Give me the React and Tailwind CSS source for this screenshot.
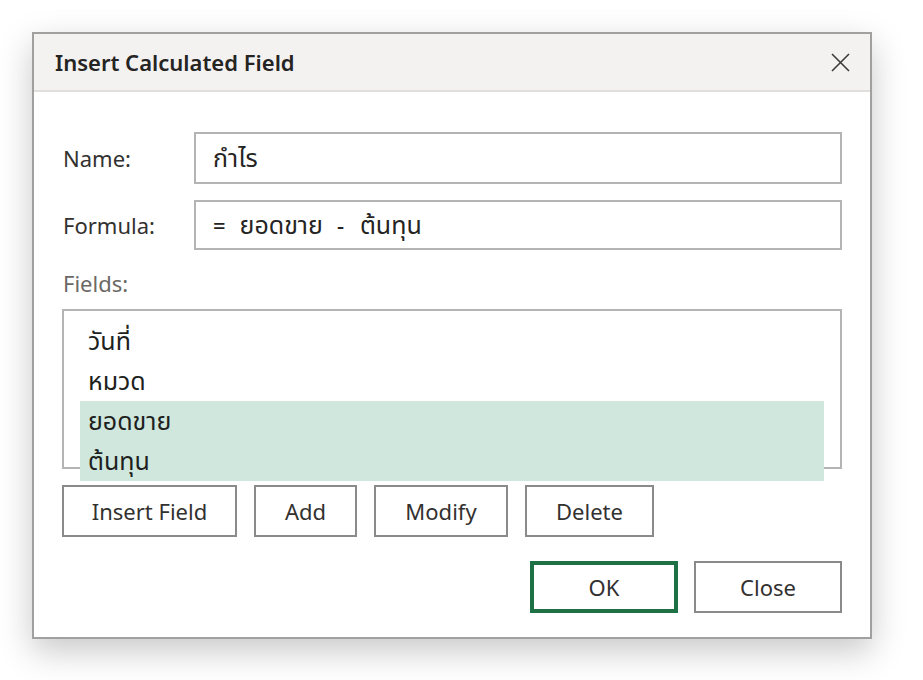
export default function App() {
  const fields = [
    { name: "วันที่", selected: false },
    { name: "หมวด", selected: false },
    { name: "ยอดขาย", selected: true },
    { name: "ต้นทุน", selected: true },
  ];

  const btn =
    "flex h-[52px] items-center justify-center border-2 border-[#8a8a8a] bg-white text-[22px] text-[#323130]";

  return (
    <div className="min-h-[680px] bg-white pl-[32px] pt-[32px] font-['Noto_Sans','Noto_Sans_Thai','DejaVu_Sans',sans-serif]">
      <div className="flex h-[607px] w-[840px] flex-col border-2 border-[#a0a0a0] bg-white shadow-[0_12px_32px_rgba(0,0,0,0.22)]">
        {/* title bar */}
        <div className="flex h-[58px] shrink-0 items-center justify-between border-b-2 border-[#e1dfdd] bg-[#f3f2f1] pl-[21px] pr-[20px]">
          <span className="text-[22px] font-semibold text-[#252423]">Insert Calculated Field</span>
          <svg width="19" height="19" viewBox="0 0 19 19" className="text-[#3b3a39]">
            <path d="M1 1 L18 18 M18 1 L1 18" stroke="currentColor" strokeWidth="1.6" fill="none" />
          </svg>
        </div>

        <div className="flex flex-col px-[28px] pt-[40px] text-[#323130]">
          <div className="flex items-center">
            <label className="w-[132px] pl-[1px] text-[22px]">Name:</label>
            <div className="flex h-[52px] flex-1 items-center border-2 border-[#b4b4b4] px-[17px] text-[25px] text-[#252423]">
              กำไร
            </div>
          </div>
          <div className="mt-[16px] flex items-center">
            <label className="w-[132px] pl-[1px] text-[22px]">Formula:</label>
            <div className="flex h-[50px] flex-1 items-center border-2 border-[#b4b4b4] px-[17px] text-[22px] text-[#252423]">
              <span className="font-medium">=</span>
              <span className="ml-[14px] text-[25px]">ยอดขาย</span>
              <span className="ml-[14px] font-medium">-</span>
              <span className="ml-[16px] text-[25px]">ต้นทุน</span>
            </div>
          </div>

          <div className="mt-[17px] pl-[1px] text-[22px] text-[#6b6966]">Fields:</div>

          <div className="mt-[9px] h-[160px] border-2 border-[#b4b4b4] px-[16px] pt-[10px]">
            {fields.map((f) => (
              <div
                key={f.name}
                className={
                  "flex h-[40px] items-center pl-[8px] text-[25px] text-[#201f1e] " +
                  (f.selected ? "bg-[#cfe7dc]" : "")
                }
              >
                {f.name}
              </div>
            ))}
          </div>

          <div className="mt-[16px] flex gap-[17px]">
            <button className={btn + " w-[175px]"}>Insert Field</button>
            <button className={btn + " w-[103px]"}>Add</button>
            <button className={btn + " w-[134px]"}>Modify</button>
            <button className={btn + " w-[129px]"}>Delete</button>
          </div>

          <div className="mt-[24px] flex justify-end gap-[16px]">
            <button className="flex h-[52px] w-[148px] items-center justify-center border-4 border-[#1e7145] bg-white text-[22px] text-[#323130]">
              OK
            </button>
            <button className={btn + " w-[148px]"}>Close</button>
          </div>
        </div>
      </div>
    </div>
  );
}
